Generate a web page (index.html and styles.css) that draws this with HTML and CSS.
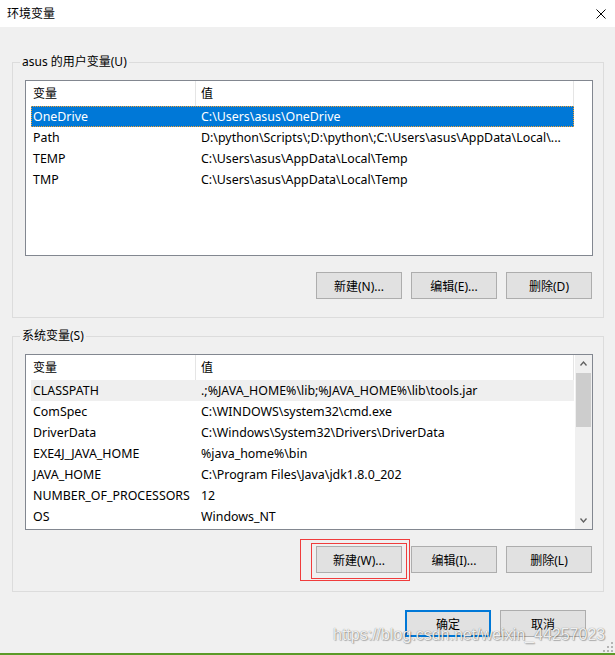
FILE: index.html
```html
<!DOCTYPE html>
<html lang="zh">
<head>
<meta charset="utf-8">
<title>环境变量</title>
<link rel="stylesheet" href="styles.css">
</head>
<body>
<div class="window">
  <div class="titlebar">
    <span class="title">环境变量</span>
    <svg class="close" viewBox="0 0 10 10" width="10" height="10"><path d="M0.5 0.5L9.5 9.5M9.5 0.5L0.5 9.5" stroke="#000" stroke-width="1" fill="none"/></svg>
  </div>
  <div class="content">
    <fieldset class="group">
      <legend>asus 的用户变量(U)</legend>
      <div class="list">
        <div class="list-main">
          <div class="header"><div class="hcell name">变量</div><div class="hcell value">值</div></div>
          <div class="rows">
            <div class="row selected"><span class="n">OneDrive</span><span class="v">C:\Users\asus\OneDrive</span></div>
            <div class="row"><span class="n">Path</span><span class="v">D:\python\Scripts\;D:\python\;C:\Users\asus\AppData\Local\...</span></div>
            <div class="row"><span class="n">TEMP</span><span class="v">C:\Users\asus\AppData\Local\Temp</span></div>
            <div class="row"><span class="n">TMP</span><span class="v">C:\Users\asus\AppData\Local\Temp</span></div>
          </div>
        </div>
      </div>
      <div class="btnrow">
        <button class="btn">新建(N)...</button>
        <button class="btn">编辑(E)...</button>
        <button class="btn">删除(D)</button>
      </div>
    </fieldset>
    <fieldset class="group">
      <legend>系统变量(S)</legend>
      <div class="list">
        <div class="list-main">
          <div class="header"><div class="hcell name">变量</div><div class="hcell value">值</div></div>
          <div class="rows">
            <div class="row hover"><span class="n">CLASSPATH</span><span class="v">.;%JAVA_HOME%\lib;%JAVA_HOME%\lib\tools.jar</span></div>
            <div class="row"><span class="n">ComSpec</span><span class="v">C:\WINDOWS\system32\cmd.exe</span></div>
            <div class="row"><span class="n">DriverData</span><span class="v">C:\Windows\System32\Drivers\DriverData</span></div>
            <div class="row"><span class="n">EXE4J_JAVA_HOME</span><span class="v">%java_home%\bin</span></div>
            <div class="row"><span class="n">JAVA_HOME</span><span class="v">C:\Program Files\Java\jdk1.8.0_202</span></div>
            <div class="row"><span class="n">NUMBER_OF_PROCESSORS</span><span class="v">12</span></div>
            <div class="row"><span class="n">OS</span><span class="v">Windows_NT</span></div>
          </div>
        </div>
        <div class="scrollbar">
          <div class="sb-btn"><svg viewBox="0 0 7 5" width="7" height="5"><polyline points="0.5,4.5 3.5,1 6.5,4.5" fill="none" stroke="#606060" stroke-width="1.3"/></svg></div>
          <div class="sb-track"><div class="sb-thumb"></div></div>
          <div class="sb-btn"><svg viewBox="0 0 7 5" width="7" height="5"><polyline points="0.5,0.5 3.5,4 6.5,0.5" fill="none" stroke="#606060" stroke-width="1.3"/></svg></div>
        </div>
      </div>
      <div class="btnrow">
        <span class="annot"><button class="btn">新建(W)...</button></span>
        <button class="btn">编辑(I)...</button>
        <button class="btn">删除(L)</button>
      </div>
    </fieldset>
    <div class="dialog-buttons">
      <button class="btn default">确定</button>
      <button class="btn">取消</button>
    </div>
  </div>
  <div class="watermark">https://blog.csdn.net/weixin_44257023</div>
  <svg class="grip" viewBox="0 0 10 10" width="10" height="10">
    <rect x="8" y="0" width="2" height="2"/><rect x="8" y="4" width="2" height="2"/><rect x="4" y="4" width="2" height="2"/>
    <rect x="8" y="8" width="2" height="2"/><rect x="4" y="8" width="2" height="2"/><rect x="0" y="8" width="2" height="2"/>
  </svg>
</div>
</body>
</html>
```
FILE: styles.css
```css
* { box-sizing: border-box; }
html, body { margin: 0; padding: 0; }
body {
  width: 615px;
  height: 655px;
  overflow: hidden;
  background: #f0f0f0;
  font-family: "Noto Sans", "Noto Sans CJK SC", sans-serif;
  font-size: 12px;
  color: #000;
}
.window {
  position: relative;
  height: 655px;
  border-bottom: 2px solid #5b9a28;
}
.titlebar {
  height: 27px;
  background: #fff;
  display: flex;
  align-items: center;
  justify-content: space-between;
  padding: 0 9px 0 7px;
}
.title { line-height: 16px; }
.close { display: block; }
.content {
  padding: 27px 11px 0 12px;
}
.group {
  margin: 0;
  padding: 10px 10px 18px 12px;
  border: 1px solid #dcdcdc;
  min-width: 0;
}
.group + .group { margin-top: 10px; }
.group legend {
  padding: 0 2px;
  margin-left: -5px;
  line-height: 16px;
}
.list {
  height: 176px;
  border: 1px solid #828790;
  background: #fff;
  display: flex;
  overflow: hidden;
}
.list-main { flex: 1; min-width: 0; overflow: hidden; }
.header { display: flex; height: 25px; width: 548px; }
.hcell { border-right: 1px solid #e5e5e5; line-height: 25px; }
.hcell.name { width: 170px; padding-left: 7px; }
.hcell.value { width: 378px; padding-left: 5px; }
.rows { padding-left: 5px; }
.row {
  display: flex;
  width: 543px;
  height: 21px;
  line-height: 21px;
  font-size: 12.4px;
  white-space: nowrap;
}
.row .n { width: 170px; flex: none; padding-left: 2px; overflow: hidden; }
.row .v { flex: 1; overflow: hidden; }
.row.selected {
  background: #0078d7;
  color: #fff;
  outline: 1px dotted #f5a030;
  outline-offset: -1px;
}
.row.hover { background: #efefef; }
.scrollbar {
  width: 17px;
  flex: none;
  background: #f0f0f0;
  display: flex;
  flex-direction: column;
}
.sb-btn {
  height: 17px;
  display: flex;
  align-items: center;
  justify-content: center;
}
.sb-btn svg { display: block; }
.sb-track { flex: 1; padding: 1px 1px 0; }
.sb-thumb { height: 54px; background: #cdcdcd; }
.btnrow {
  display: flex;
  justify-content: flex-end;
  gap: 9px;
  margin-top: 16px;
  padding-right: 1px;
}
.btn {
  width: 86px;
  height: 27px;
  padding: 0;
  margin: 0;
  background: #e1e1e1;
  border: 1px solid #adadad;
  font: inherit;
  color: #000;
}
.btn.default { border: 2px solid #0078d7; }
.annot { position: relative; display: block; }
.annot .btn { display: block; }
.annot::before,
.annot::after {
  content: "";
  position: absolute;
  border: 1px solid #f03c3c;
  pointer-events: none;
}
.annot::before { left: -16px; top: -7px; right: -8px; bottom: -8px; }
.annot::after { left: -5px; top: -3px; right: -5px; bottom: -6px; }
.dialog-buttons {
  display: flex;
  justify-content: flex-end;
  gap: 9px;
  margin: 18px 18px 0 0;
}
.watermark {
  position: absolute;
  left: 333px;
  top: 627px;
  font-family: "Liberation Sans", Arial, sans-serif;
  font-size: 16px;
  line-height: 16px;
  color: rgba(255, 255, 255, 0.9);
  text-shadow: 0 0 1px rgba(0, 0, 0, 0.5), 1px 1px 1px rgba(0, 0, 0, 0.25);
  white-space: nowrap;
}
.grip {
  position: absolute;
  right: 2px;
  bottom: 1px;
  fill: #b4b4b4;
}
```
